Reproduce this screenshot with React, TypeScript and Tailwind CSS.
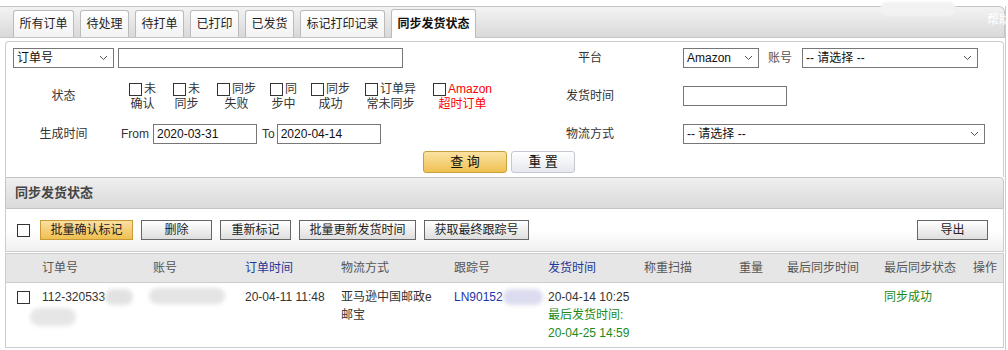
import React from "react";

const FONT = '"Liberation Sans", "Noto Sans CJK SC", Arial, sans-serif';

const TABS = [
  { label: "所有订单", w: 61 },
  { label: "待处理", w: 49 },
  { label: "待打单", w: 49 },
  { label: "已打印", w: 49 },
  { label: "已发货", w: 49 },
  { label: "标记打印记录", w: 85 },
];

const STATES = [
  { a: "未", b: "确认", w: 27, ml: 0 },
  { a: "未", b: "同步", w: 27, ml: 17 },
  { a: "同步", b: "失败", w: 39, ml: 17 },
  { a: "同", b: "步中", w: 27, ml: 14 },
  { a: "同步", b: "成功", w: 39, ml: 14 },
  { a: "订单异", b: "常未同步", w: 51, ml: 15 },
  { a: "Amazon", b: "超时订单", w: 59, ml: 17, red: true },
];

const COLS = [
  { label: "", w: 36 },
  { label: "订单号", w: 111 },
  { label: "账号", w: 92 },
  { label: "订单时间", w: 96, link: true },
  { label: "物流方式", w: 113 },
  { label: "跟踪号", w: 94 },
  { label: "发货时间", w: 96, link: true },
  { label: "称重扫描", w: 95 },
  { label: "重量", w: 48 },
  { label: "最后同步时间", w: 97 },
  { label: "最后同步状态", w: 89 },
  { label: "操作", w: 30 },
];

function Chevron() {
  return (
    <svg width="9" height="6" viewBox="0 0 9 6" className="shrink-0">
      <path d="M1 1l3.5 3.5L8 1" fill="none" stroke="#555" strokeWidth="1" />
    </svg>
  );
}

function Select({ value, w }: { value: string; w: number }) {
  return (
    <div
      className="flex h-[20px] items-center justify-between border border-[#777] bg-white pl-[3px] pr-[5px] text-[12px] text-[#111]"
      style={{ width: w }}
    >
      <span>{value}</span>
      <Chevron />
    </div>
  );
}

function TextBox({ w, value = "" }: { w: number; value?: string }) {
  return (
    <div
      className="flex h-[20px] items-center border border-[#777] bg-white pl-[3px] text-[12px] text-[#111]"
      style={{ width: w }}
    >
      {value}
    </div>
  );
}

function Box() {
  return <span className="inline-block h-[13px] w-[13px] shrink-0 border border-[#333] bg-white" />;
}

function GrayButton({ label, w }: { label: string; w: number }) {
  return (
    <div
      className="flex h-[20px] items-center justify-center border border-[#666] bg-linear-to-b from-white to-[#dedede] text-[12px] text-[#222]"
      style={{ width: w }}
    >
      {label}
    </div>
  );
}

function Blob({ w, h, color }: { w: number; h: number; color: string }) {
  return (
    <span
      className="inline-block rounded-full blur-[2px]"
      style={{ width: w, height: h, background: color }}
    />
  );
}

export default function App() {
  return (
    <div className="relative h-[350px] w-[1008px] overflow-hidden bg-white" style={{ fontFamily: FONT }}>
      <div className="w-[1006px] border-r border-[#ccc] pb-[10px]">
        {/* tab bar */}
        <div className="mt-[6px] flex h-[32px] w-[1005px] items-end gap-[6px] rounded-tr-[6px] border-t border-r border-b border-[#c4c4c4] bg-linear-to-b from-[#f3f3f3] to-[#d9d9d9] pl-[13px]">
          {TABS.map((t) => (
            <div
              key={t.label}
              className="flex h-[27px] items-center justify-center rounded-t-[3px] border border-b-0 border-[#bbb] bg-linear-to-b from-white to-[#f2f2f2] text-[12px] text-[#222]"
              style={{ width: t.w }}
            >
              {t.label}
            </div>
          ))}
          <div className="-mb-px flex h-[29px] w-[85px] items-center justify-center rounded-t-[3px] border border-b-0 border-[#bbb] bg-white text-[12px] font-bold text-[#111]">
            同步发货状态
          </div>
        </div>

        {/* search panel */}
        <div className="mt-[3px] ml-[5px] h-[136px] w-[999px] rounded-t-[4px] border border-b-0 border-[#ccc] text-[12px] text-[#333]">
          <div className="mt-[6px] flex h-[20px] items-center">
            <div className="flex w-[524px] items-center pl-[7px]">
              <Select value="订单号" w={101} />
              <div className="ml-[4px]">
                <TextBox w={285} />
              </div>
            </div>
            <div className="w-[120px] text-center">平台</div>
            <div className="flex items-center pl-[33px]">
              <Select value="Amazon" w={76} />
              <span className="ml-[9px] text-[#555]">账号</span>
              <div className="ml-[10px]">
                <Select value="-- 请选择 --" w={176} />
              </div>
            </div>
          </div>

          <div className="flex h-[56px] items-center">
            <div className="w-[115px] text-center">状态</div>
            <div className="flex w-[409px] items-center pl-[8px] pt-[1px]">
              {STATES.map((s, i) => (
                <div
                  key={i}
                  className={`flex flex-col text-[12px] leading-[15px] ${s.red ? "text-[#f00]" : "text-[#333]"}`}
                  style={{ width: s.w, marginLeft: s.ml }}
                >
                  <div className="flex items-center gap-[2px]">
                    <Box />
                    <span>{s.a}</span>
                  </div>
                  <div className="whitespace-nowrap text-center">{s.b}</div>
                </div>
              ))}
            </div>
            <div className="w-[120px] text-center">发货时间</div>
            <div className="pl-[33px]">
              <TextBox w={104} />
            </div>
          </div>

          <div className="flex h-[20px] items-center">
            <div className="w-[115px] text-center">生成时间</div>
            <div className="flex w-[409px] items-center">
              <span>From</span>
              <div className="ml-[4px]">
                <TextBox w={104} value="2020-03-31" />
              </div>
              <span className="ml-[5px]">To</span>
              <div className="ml-[2px]">
                <TextBox w={104} value="2020-04-14" />
              </div>
            </div>
            <div className="w-[120px] text-center">物流方式</div>
            <div className="pl-[33px]">
              <Select value="-- 请选择 --" w={302} />
            </div>
          </div>

          <div className="mt-[7px] flex items-center pl-[417px]">
            <div className="flex h-[22px] w-[84px] items-center justify-center rounded-[3px] border border-[#c9a040] bg-linear-to-b from-[#fbe2a0] to-[#efc14f] text-[13px] text-[#111]">
              查 询
            </div>
            <div className="ml-[4px] flex h-[22px] w-[64px] items-center justify-center rounded-[3px] border border-[#c4c8d0] bg-linear-to-b from-white to-[#e6e8ee] text-[13px] text-[#111]">
              重 置
            </div>
          </div>
        </div>

        {/* section header */}
        <div className="ml-[5px] flex h-[32px] w-[999px] items-center rounded-tr-[4px] border border-[#c4c4c4] bg-linear-to-b from-[#efefef] to-[#dadada] pl-[9px] text-[13px] font-bold text-[#444]">
          同步发货状态
        </div>

        {/* toolbar */}
        <div className="ml-[5px] flex h-[43px] w-[999px] items-center border-x border-b border-[#ccc] bg-linear-to-b from-white via-white to-[#f0f0f0] pl-[11px] pr-[15px]">
          <Box />
          <div className="ml-[10px] flex h-[20px] w-[93px] items-center justify-center border border-[#c99a3a] bg-linear-to-b from-[#fbe0a0] to-[#efbf4d] text-[12px] text-[#222]">
            批量确认标记
          </div>
          <div className="ml-[8px]">
            <GrayButton label="删除" w={71} />
          </div>
          <div className="ml-[8px]">
            <GrayButton label="重新标记" w={71} />
          </div>
          <div className="ml-[8px]">
            <GrayButton label="批量更新发货时间" w={117} />
          </div>
          <div className="ml-[8px]">
            <GrayButton label="获取最终跟踪号" w={105} />
          </div>
          <div className="ml-auto">
            <GrayButton label="导出" w={71} />
          </div>
        </div>

        {/* table */}
        <div className="mt-px ml-[5px] w-[999px] border-x border-[#ccc] text-[12px]">
          <div className="flex h-[30px] items-center border-y border-[#ccc] bg-[#e6e6e6]">
            {COLS.map((c, i) => (
              <div
                key={i}
                className={`shrink-0 whitespace-nowrap ${c.link ? "text-[#1e3799]" : "text-[#555]"}`}
                style={{ width: c.w }}
              >
                {c.label}
              </div>
            ))}
          </div>
          <div className="flex h-[65px] items-start border-b border-[#ccc] pt-[5px] leading-[18px] text-[#333]">
            <div className="w-[36px] shrink-0 pt-[3px] pl-[11px]">
              <Box />
            </div>
            <div className="w-[111px] shrink-0">
              <div className="flex items-center whitespace-nowrap">
                112-320533
                <Blob w={28} h={16} color="#e2e2e2" />
              </div>
              <div className="mt-[2px]">
                <span className="-ml-[12px] inline-block">
                  <Blob w={46} h={18} color="#e6e6e6" />
                </span>
              </div>
            </div>
            <div className="-ml-[4px] w-[96px] shrink-0">
              <Blob w={76} h={16} color="#e4e4e4" />
            </div>
            <div className="w-[96px] shrink-0">20-04-11 11:48</div>
            <div className="w-[113px] shrink-0">
              亚马逊中国邮政e
              <br />
              邮宝
            </div>
            <div className="w-[94px] shrink-0">
              <div className="flex items-center whitespace-nowrap text-[#1b34a8]">
                LN90152
                <Blob w={40} h={16} color="#dcdcf0" />
              </div>
            </div>
            <div className="w-[96px] shrink-0">
              <div>20-04-14 10:25</div>
              <div className="text-[#1a8a1a]">最后发货时间:</div>
              <div className="text-[#1a8a1a]">20-04-25 14:59</div>
            </div>
            <div className="w-[95px] shrink-0" />
            <div className="w-[48px] shrink-0" />
            <div className="w-[97px] shrink-0" />
            <div className="w-[89px] shrink-0 text-[#1a8a1a]">同步成功</div>
            <div className="w-[30px] shrink-0" />
          </div>
        </div>
      </div>

      {/* top-right overlay */}
      <span className="absolute top-[2px] left-[880px] h-[14px] w-[76px] rounded-full bg-[#f2f2f2] blur-[1px]" />
      <span className="absolute top-[11px] left-[987px] whitespace-nowrap text-[12px] text-white">帮助</span>
    </div>
  );
}
